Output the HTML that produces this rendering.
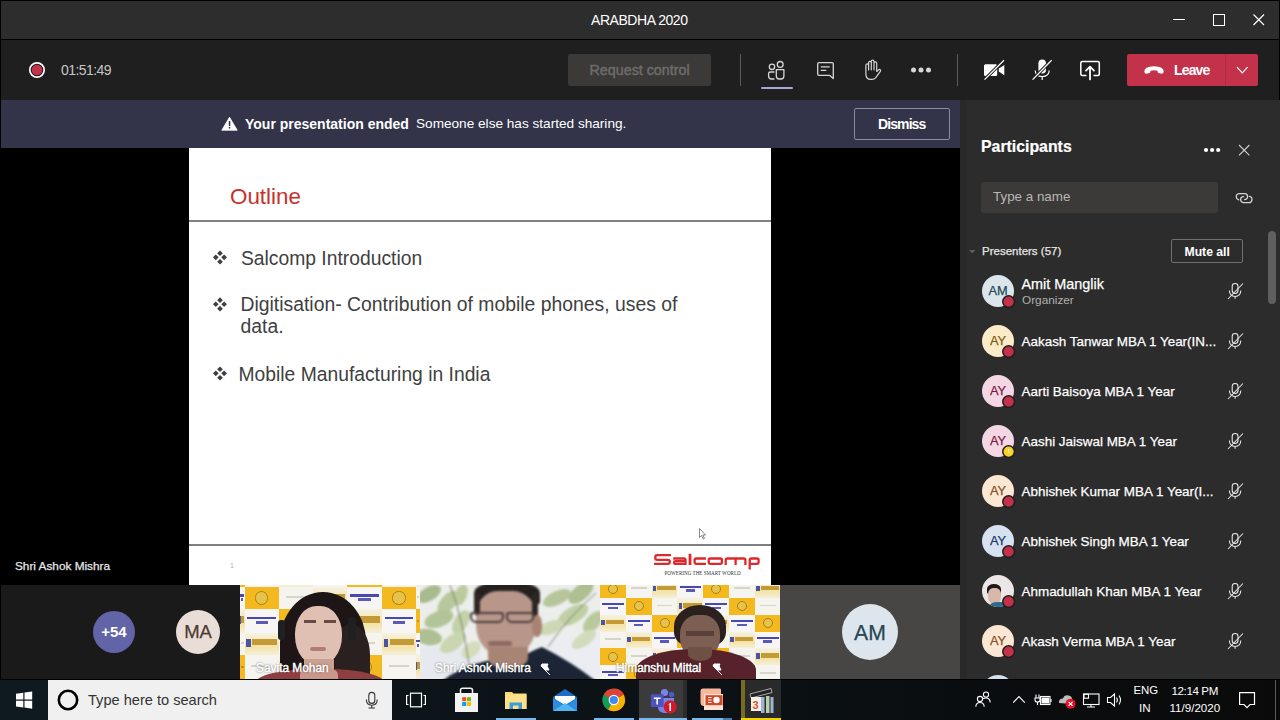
<!DOCTYPE html>
<html><head><meta charset="utf-8">
<style>
*{margin:0;padding:0;box-sizing:border-box}
html,body{width:1280px;height:720px;overflow:hidden;background:#000}
body{position:relative;font-family:"Liberation Sans",sans-serif;color:#fff}
.a{position:absolute}
.t{position:absolute;line-height:1;white-space:nowrap}
svg{position:absolute;overflow:visible}
.w{-webkit-text-stroke:0.25px currentColor}
</style></head><body>
<!-- title bar -->
<div class="a" style="left:1px;top:1px;width:1278px;height:38px;background:#2d2d2d"></div>
<div class="t" style="left:591px;top:13px;font-size:14px;color:#fff;letter-spacing:-0.45px">ARABDHA 2020</div>
<div class="a" style="left:1173px;top:19px;width:12px;height:1px;background:#fff"></div>
<div class="a" style="left:1213px;top:14px;width:12px;height:12px;border:1px solid #fff"></div>
<svg style="left:0;top:0" width="1" height="1"><path d="M1253.5 14.5L1264 25M1264 14.5L1253.5 25" stroke="#fff" stroke-width="1.2"/></svg>

<!-- meeting header -->
<div class="a" style="left:1px;top:40px;width:1278px;height:60px;background:#1f1f1f"></div>
<svg style="left:0;top:0" width="1" height="1">
 <circle cx="37" cy="70" r="7.2" fill="none" stroke="#fff" stroke-width="1.7"/>
 <circle cx="37" cy="70" r="5.3" fill="#c4314b"/>
</svg>
<div class="t" style="left:61px;top:63px;font-size:14px;color:#c8c6c4;letter-spacing:-0.55px">01:51:49</div>

<div class="a" style="left:568px;top:54px;width:143px;height:32px;background:#3b3a39;border-radius:2px"></div>
<div class="t" style="left:589.5px;top:63px;font-size:14.3px;color:#6d6c6b;-webkit-text-stroke:0.45px #6d6c6b">Request control</div>
<div class="a" style="left:740px;top:54px;width:1px;height:32px;background:#5a5a5a"></div>
<div class="a" style="left:957px;top:54px;width:1px;height:32px;background:#5a5a5a"></div>

<svg style="left:0;top:0" width="1" height="1" fill="none" stroke="#d6d6d6" stroke-width="1.3" stroke-linecap="round" stroke-linejoin="round">
 <!-- people -->
 <circle cx="772" cy="66.8" r="2.7"/>
 <circle cx="780.2" cy="64.4" r="2.9"/>
 <path d="M774 72H770.2Q768.6 72 768.6 73.6V76Q768.6 79 771.6 79H774"/>
 <path d="M776.3 69.7H783.9V76Q783.9 79 780.9 79H779.3Q776.3 79 776.3 76Z"/>
 <!-- chat -->
 <path d="M819 62.7H832Q833.3 62.7 833.3 64V78.6L829.5 75.3H819Q817.7 75.3 817.7 74V64Q817.7 62.7 819 62.7Z"/>
 <path d="M821.3 66.8H829.3M821.3 70.4H825.8"/>
 <!-- hand -->
 <path d="M865.9 74V65.3a1.35 1.35 0 0 1 2.7 0V70V62.7a1.35 1.35 0 0 1 2.7 0V69.8V61.4a1.35 1.35 0 0 1 2.7 0V69.8V63.3a1.35 1.35 0 0 1 2.7 0V71.5L878.8 69.6a1.2 1.2 0 0 1 1.7 1.5L875.6 77.8Q874.2 79.4 872 79.4H870.8Q865.9 79.4 865.9 74Z" stroke-width="1.2"/>
</svg>
<svg style="left:0;top:0" width="1" height="1" fill="#d6d6d6">
 <circle cx="913.5" cy="70" r="2.5"/><circle cx="921" cy="70" r="2.5"/><circle cx="928.5" cy="70" r="2.5"/>
</svg>
<div class="a" style="left:761px;top:87px;width:32px;height:2px;background:#a6a7dc;border-radius:1px"></div>

<!-- camera / mic / share -->
<svg style="left:0;top:0" width="1" height="1">
 <rect x="984" y="64.3" width="13.2" height="11.8" rx="1.6" fill="#fff"/>
 <path d="M998.8 68.6L1004.3 65V75.2L998.8 71.6Z" fill="#fff"/>
 <path d="M984.5 79.6L1004 60.2" stroke="#1f1f1f" stroke-width="3.2"/>
 <path d="M984.5 79.6L1004 60.2" stroke="#fff" stroke-width="1.3"/>
 <rect x="1038.4" y="59.6" width="7.6" height="14" rx="3.8" fill="#fff"/>
 <path d="M1035.2 70.6Q1035.4 76.6 1042.2 76.6Q1049 76.6 1049.2 70.6M1042.2 76.6V80" fill="none" stroke="#fff" stroke-width="1.2"/>
 <path d="M1032.6 79.6L1051.6 60.2" stroke="#1f1f1f" stroke-width="3.2"/>
 <path d="M1032.6 79.6L1051.6 60.2" stroke="#fff" stroke-width="1.3"/>
 <path d="M1086.5 75.6H1082.3Q1080.8 75.6 1080.8 74.1V63Q1080.8 61.5 1082.3 61.5H1097.8Q1099.3 61.5 1099.3 63V74.1Q1099.3 75.6 1097.8 75.6H1093.5" fill="none" stroke="#fff" stroke-width="1.5"/>
 <path d="M1090 79.4V66.8M1086 70.6L1090 66.6L1094 70.6" fill="none" stroke="#fff" stroke-width="1.8" stroke-linecap="round" stroke-linejoin="round"/>
</svg>

<!-- Leave -->
<div class="a" style="left:1127px;top:54px;width:131px;height:32px;background:#c4314b;border-radius:2px"></div>
<div class="a" style="left:1225px;top:54px;width:1px;height:32px;background:#b32c44"></div>
<svg style="left:0;top:0" width="1" height="1">
 <path d="M1144.3 71.8Q1144 66.6 1154 66.2Q1164 66.6 1163.7 71.8Q1163.4 74 1160.8 73.6L1158.5 73Q1157.3 72.6 1157.5 70.8Q1154 69.9 1150.5 70.8Q1150.7 72.6 1149.5 73L1147.2 73.6Q1144.6 74 1144.3 71.8Z" fill="#fff"/>
 <path d="M1237 67.2L1242.3 72.8L1247.6 67.2" fill="none" stroke="#fff" stroke-width="1.2"/>
</svg>
<div class="t" style="left:1174px;top:63px;font-size:14px;font-weight:bold;color:#fff;letter-spacing:-0.85px">Leave</div>

<!-- banner -->
<div class="a" style="left:1px;top:100px;width:959px;height:48px;background:#33344a"></div>
<svg style="left:0;top:0" width="1" height="1">
 <path d="M229.5 117.2L237.2 130.2H221.8Z" fill="#fff" stroke="#fff" stroke-width="0.8" stroke-linejoin="round"/>
 <rect x="228.8" y="121" width="1.5" height="5" fill="#33344a"/>
 <rect x="228.8" y="127" width="1.5" height="1.5" fill="#33344a"/>
</svg>
<div class="t" style="left:245px;top:117px;font-size:14px;font-weight:bold;color:#fff">Your presentation ended</div>
<div class="t" style="left:416px;top:117px;font-size:13.62px;color:#fff">Someone else has started sharing.</div>
<div class="a" style="left:854px;top:108px;width:96px;height:32px;border:1px solid #8a8aa0;border-radius:2px"></div>
<div class="t" style="left:878px;top:116.6px;font-size:14px;font-weight:bold;color:#fff;letter-spacing:-0.9px">Dismiss</div>
<!-- stage -->
<div class="a" style="left:0;top:148px;width:960px;height:437px;background:#000"></div>
<div class="a" style="left:189px;top:148px;width:582px;height:437px;background:#fff"></div>
<div class="t" style="left:230px;top:186px;font-size:22.4px;color:#c8312b">Outline</div>
<div class="a" style="left:189px;top:219.5px;width:582px;height:2px;background:#808080"></div>
<svg style="left:0;top:0" width="1" height="1" fill="#404040">
 <path d="M220 250.4l2.85 2.85l-2.85 2.85l-2.85-2.85Z M215.8 254.5l2.85 2.85l-2.85 2.85l-2.85-2.85Z M224.1 254.5l2.85 2.85l-2.85 2.85l-2.85-2.85Z M220 258.9l2.85 2.85l-2.85 2.85l-2.85-2.85Z"/>
 <path transform="translate(0 46.9)" d="M220 250.4l2.85 2.85l-2.85 2.85l-2.85-2.85Z M215.8 254.5l2.85 2.85l-2.85 2.85l-2.85-2.85Z M224.1 254.5l2.85 2.85l-2.85 2.85l-2.85-2.85Z M220 258.9l2.85 2.85l-2.85 2.85l-2.85-2.85Z"/>
 <path transform="translate(0 116)" d="M220 250.4l2.85 2.85l-2.85 2.85l-2.85-2.85Z M215.8 254.5l2.85 2.85l-2.85 2.85l-2.85-2.85Z M224.1 254.5l2.85 2.85l-2.85 2.85l-2.85-2.85Z M220 258.9l2.85 2.85l-2.85 2.85l-2.85-2.85Z"/>
</svg>
<div class="t" style="left:241px;top:249px;font-size:19.3px;color:#404040">Salcomp Introduction</div>
<div class="t" style="left:240.5px;top:295px;font-size:19.38px;color:#404040">Digitisation- Contribution of mobile phones, uses of</div>
<div class="t" style="left:240.5px;top:317px;font-size:19.38px;color:#404040">data.</div>
<div class="t" style="left:238.5px;top:365px;font-size:19.3px;color:#404040">Mobile Manufacturing in India</div>
<div class="a" style="left:189px;top:543.5px;width:582px;height:2px;background:#808080"></div>
<div class="t" style="left:230px;top:562px;font-size:7px;color:#b0b0b0">1</div>
<svg style="left:0;top:0" width="1" height="1" fill="none" stroke="#dc2a2c" stroke-width="2.3">
 <path d="M671 555.1H657.2Q655.3 555.1 655.3 557V557.9Q655.3 559.8 657.2 559.8H667.9Q669.8 559.8 669.8 561.7V561.9Q669.8 563.8 667.9 563.8H654"/>
 <path d="M673.2 558.5H683.8Q685.5 558.5 685.5 560.2V565M685.5 561.1H675.6Q674.1 561.1 674.1 562.4Q674.1 563.8 675.6 563.8H685.5"/>
 <path d="M690 553.8V565" stroke-width="2.8"/>
 <path d="M706 558.5H696.3Q694.6 558.5 694.6 560.2V562.1Q694.6 563.8 696.3 563.8H706"/>
 <rect x="708.7" y="558.5" width="13.2" height="5.3" rx="1.6"/>
 <path d="M725.7 565V560.2Q725.7 558.5 727.4 558.5H743.7Q745.4 558.5 745.4 560.2V565M735.6 558.5V565"/>
 <path d="M749.7 569.4V560.2Q749.7 558.5 751.4 558.5H756.9Q758.6 558.5 758.6 560.2V562.1Q758.6 563.8 756.9 563.8H749.7"/>
</svg>
<div class="t" style="left:664.5px;top:571.2px;font-size:5.1px;color:#333;font-family:'Liberation Serif',serif">POWERING THE SMART WORLD</div>
<svg style="left:0;top:0" width="1" height="1"><path d="M699.5 528.5V537.5L701.5 535.5L703.3 539L704.5 538.4L702.8 535H705.5Z" fill="#fff" stroke="#555" stroke-width="0.7"/></svg>
<!-- participants panel -->
<div class="a" style="left:960px;top:100px;width:320px;height:579px;background:#2d2c2c"></div>
<div class="a" style="left:960px;top:100px;width:7px;height:579px;background:#2a2929"></div>
<div class="t" style="left:981px;top:139.2px;font-size:15.85px;font-weight:bold;color:#fff;-webkit-text-stroke:0.2px #fff">Participants</div>
<svg style="left:0;top:0" width="1" height="1" fill="#fff"><circle cx="1206" cy="150" r="2.1"/><circle cx="1212.1" cy="150" r="2.1"/><circle cx="1218.2" cy="150" r="2.1"/><path d="M1239 145L1249.4 155.4M1249.4 145L1239 155.4" stroke="#d0d0d0" stroke-width="1.1" fill="none"/></svg>
<div class="a" style="left:981px;top:182px;width:237px;height:31px;background:#3b3a39;border-radius:3px"></div>
<div class="t" style="left:993px;top:190px;font-size:13.4px;color:#b9b7b5">Type a name</div>
<svg style="left:0;top:0" width="1" height="1" fill="none" stroke="#d4d4d4" stroke-width="1.3" stroke-linecap="round"><path d="M1238.8 199.8A3.1 3.1 0 0 1 1240 193.6H1244.6A3 3 0 0 1 1244.6 199.6"/><path d="M1249.4 196.4A3.1 3.1 0 0 1 1248.2 202.6H1243.6A3 3 0 0 1 1243.6 196.6"/></svg>
<svg style="left:0;top:0" width="1" height="1"><path d="M969 250L975.6 250L972.3 253.5Z" fill="#5c5c5c"/></svg>
<div class="t w" style="left:982px;top:245.5px;font-size:11.5px;color:#e6e6e6">Presenters (57)</div>
<div class="a" style="left:1171px;top:239px;width:72px;height:24px;border:1px solid #707070;border-radius:2px"></div>
<div class="t" style="left:1184.5px;top:245.5px;font-size:12.2px;font-weight:bold;color:#fff">Mute all</div>
<div class="a" style="left:1268px;top:231px;width:8px;height:73px;background:#5f5f5f;border-radius:4px"></div>
<div class="a" style="left:982px;top:275px;width:32px;height:32px;border-radius:50%;background:#dbe6ec"></div>
<div class="t w" style="left:982px;width:32px;text-align:center;top:284.8px;font-size:12.8px;color:#244656">AM</div>
<svg style="left:0;top:0" width="1" height="1"><circle cx="1008.6" cy="301.6" r="6.6" fill="#1e1e1e"/><circle cx="1008.6" cy="301.6" r="5.1" fill="#c4314b"/></svg>
<div class="t w" style="left:1021.5px;top:277.4px;font-size:14.4px;color:#fff">Amit Manglik</div>
<div class="t" style="left:1022px;top:294.8px;font-size:11.8px;color:#b0b0b0">Organizer</div>
<svg style="left:0;top:0" width="1" height="1" fill="none" stroke="#ececec" stroke-width="1.05"><rect x="1232.2" y="283.4" width="5.8" height="10" rx="2.9"/><path d="M1229.4 290.5Q1229.6 296.4 1235.1 296.4Q1240.6 296.4 1240.8 290.5M1235.1 296.4V298.8"/><path d="M1228 299L1243 283.5"/></svg>
<div class="a" style="left:982px;top:325px;width:32px;height:32px;border-radius:50%;background:#fbebc9"></div>
<div class="t w" style="left:982px;width:32px;text-align:center;top:334.8px;font-size:12.8px;color:#7d5e10">AY</div>
<svg style="left:0;top:0" width="1" height="1"><circle cx="1008.6" cy="351.6" r="6.6" fill="#1e1e1e"/><circle cx="1008.6" cy="351.6" r="5.1" fill="#c4314b"/></svg>
<div class="t w" style="left:1021.5px;top:335px;font-size:13.45px;color:#fff">Aakash Tanwar MBA 1 Year(IN...</div>
<svg style="left:0;top:0" width="1" height="1" fill="none" stroke="#ececec" stroke-width="1.05"><rect x="1232.2" y="333.4" width="5.8" height="10" rx="2.9"/><path d="M1229.4 340.5Q1229.6 346.4 1235.1 346.4Q1240.6 346.4 1240.8 340.5M1235.1 346.4V348.8"/><path d="M1228 349L1243 333.5"/></svg>
<div class="a" style="left:982px;top:375px;width:32px;height:32px;border-radius:50%;background:#f3d7e4"></div>
<div class="t w" style="left:982px;width:32px;text-align:center;top:384.8px;font-size:12.8px;color:#7e1a46">AY</div>
<svg style="left:0;top:0" width="1" height="1"><circle cx="1008.6" cy="401.6" r="6.6" fill="#1e1e1e"/><circle cx="1008.6" cy="401.6" r="5.1" fill="#c4314b"/></svg>
<div class="t w" style="left:1021.5px;top:385px;font-size:13.45px;color:#fff">Aarti Baisoya MBA 1 Year</div>
<svg style="left:0;top:0" width="1" height="1" fill="none" stroke="#ececec" stroke-width="1.05"><rect x="1232.2" y="383.4" width="5.8" height="10" rx="2.9"/><path d="M1229.4 390.5Q1229.6 396.4 1235.1 396.4Q1240.6 396.4 1240.8 390.5M1235.1 396.4V398.8"/><path d="M1228 399L1243 383.5"/></svg>
<div class="a" style="left:982px;top:425px;width:32px;height:32px;border-radius:50%;background:#f3d7e4"></div>
<div class="t w" style="left:982px;width:32px;text-align:center;top:434.8px;font-size:12.8px;color:#7e1a46">AY</div>
<svg style="left:0;top:0" width="1" height="1"><circle cx="1008.6" cy="451.6" r="6.6" fill="#1e1e1e"/><circle cx="1008.6" cy="451.6" r="5.1" fill="#f8d22a"/><path d="M1008.6 449V451.8L1010.2 453.4" stroke="#fff" stroke-width="0.9" fill="none"/></svg>
<div class="t w" style="left:1021.5px;top:435px;font-size:13.45px;color:#fff">Aashi Jaiswal MBA 1 Year</div>
<svg style="left:0;top:0" width="1" height="1" fill="none" stroke="#ececec" stroke-width="1.05"><rect x="1232.2" y="433.4" width="5.8" height="10" rx="2.9"/><path d="M1229.4 440.5Q1229.6 446.4 1235.1 446.4Q1240.6 446.4 1240.8 440.5M1235.1 446.4V448.8"/><path d="M1228 449L1243 433.5"/></svg>
<div class="a" style="left:982px;top:475px;width:32px;height:32px;border-radius:50%;background:#fbe7d3"></div>
<div class="t w" style="left:982px;width:32px;text-align:center;top:484.8px;font-size:12.8px;color:#84501e">AY</div>
<svg style="left:0;top:0" width="1" height="1"><circle cx="1008.6" cy="501.6" r="6.6" fill="#1e1e1e"/><circle cx="1008.6" cy="501.6" r="5.1" fill="#c4314b"/></svg>
<div class="t w" style="left:1021.5px;top:485px;font-size:13.45px;color:#fff">Abhishek Kumar MBA 1 Year(I...</div>
<svg style="left:0;top:0" width="1" height="1" fill="none" stroke="#ececec" stroke-width="1.05"><rect x="1232.2" y="483.4" width="5.8" height="10" rx="2.9"/><path d="M1229.4 490.5Q1229.6 496.4 1235.1 496.4Q1240.6 496.4 1240.8 490.5M1235.1 496.4V498.8"/><path d="M1228 499L1243 483.5"/></svg>
<div class="a" style="left:982px;top:525px;width:32px;height:32px;border-radius:50%;background:#d6e2ef"></div>
<div class="t w" style="left:982px;width:32px;text-align:center;top:534.8px;font-size:12.8px;color:#1b3668">AY</div>
<svg style="left:0;top:0" width="1" height="1"><circle cx="1008.6" cy="551.6" r="6.6" fill="#1e1e1e"/><circle cx="1008.6" cy="551.6" r="5.1" fill="#c4314b"/></svg>
<div class="t w" style="left:1021.5px;top:535px;font-size:13.45px;color:#fff">Abhishek Singh MBA 1 Year</div>
<svg style="left:0;top:0" width="1" height="1" fill="none" stroke="#ececec" stroke-width="1.05"><rect x="1232.2" y="533.4" width="5.8" height="10" rx="2.9"/><path d="M1229.4 540.5Q1229.6 546.4 1235.1 546.4Q1240.6 546.4 1240.8 540.5M1235.1 546.4V548.8"/><path d="M1228 549L1243 533.5"/></svg>
<div class="a" style="left:982px;top:575px;width:32px;height:32px;border-radius:50%;overflow:hidden;background:#ece6e6"><div class="a" style="left:5px;top:9px;width:14px;height:10px;border-radius:50% 50% 20% 20%;background:#1e1818"></div><div class="a" style="left:6px;top:13px;width:13px;height:16px;border-radius:40% 40% 45% 45%;background:#d8b8a8"></div><div class="a" style="left:8px;top:27px;width:18px;height:8px;border-radius:40% 40% 0 0;background:#2d6b8c"></div></div>
<svg style="left:0;top:0" width="1" height="1"><circle cx="1008.6" cy="601.6" r="6.6" fill="#1e1e1e"/><circle cx="1008.6" cy="601.6" r="5.1" fill="#c4314b"/></svg>
<div class="t w" style="left:1021.5px;top:585px;font-size:13.45px;color:#fff">Ahmadullah Khan MBA 1 Year</div>
<svg style="left:0;top:0" width="1" height="1" fill="none" stroke="#ececec" stroke-width="1.05"><rect x="1232.2" y="583.4" width="5.8" height="10" rx="2.9"/><path d="M1229.4 590.5Q1229.6 596.4 1235.1 596.4Q1240.6 596.4 1240.8 590.5M1235.1 596.4V598.8"/><path d="M1228 599L1243 583.5"/></svg>
<div class="a" style="left:982px;top:625px;width:32px;height:32px;border-radius:50%;background:#fbe7d3"></div>
<div class="t w" style="left:982px;width:32px;text-align:center;top:634.8px;font-size:12.8px;color:#84501e">AY</div>
<svg style="left:0;top:0" width="1" height="1"><circle cx="1008.6" cy="651.6" r="6.6" fill="#1e1e1e"/><circle cx="1008.6" cy="651.6" r="5.1" fill="#c4314b"/></svg>
<div class="t w" style="left:1021.5px;top:635px;font-size:13.45px;color:#fff">Akash Verma MBA 1 Year</div>
<svg style="left:0;top:0" width="1" height="1" fill="none" stroke="#ececec" stroke-width="1.05"><rect x="1232.2" y="633.4" width="5.8" height="10" rx="2.9"/><path d="M1229.4 640.5Q1229.6 646.4 1235.1 646.4Q1240.6 646.4 1240.8 640.5M1235.1 646.4V648.8"/><path d="M1228 649L1243 633.5"/></svg>
<div class="a" style="left:960px;top:674px;width:320px;height:5px;overflow:hidden"><div class="a" style="left:22px;top:1px;width:32px;height:32px;border-radius:50%;background:#d6e2ef"></div></div>
<!-- strip -->
<div class="a" style="left:1px;top:585px;width:239px;height:94px;background:#1b1a1a"></div>
<div class="t w" style="left:15px;top:560.8px;font-size:11.8px;color:#e8e8e8">Shri Ashok Mishra</div>
<div class="a" style="left:93px;top:611px;width:42px;height:42px;border-radius:50%;background:#6264a7"></div>
<div class="t" style="left:93px;width:42px;text-align:center;top:624px;font-size:15px;font-weight:bold;color:#fff">+54</div>
<div class="a" style="left:176px;top:610px;width:44px;height:44px;border-radius:50%;background:#e9ded7"></div>
<div class="t w" style="left:176px;width:44px;text-align:center;top:622.8px;font-size:18.5px;color:#4f3a2e">MA</div>
<div class="a" style="left:240px;top:585px;width:180px;height:94px;overflow:hidden;background:#f5f3ec">
<div class="a" style="left:0;top:0;width:180px;height:94px;filter:blur(0.7px)">
<div class="a" style="left:0.0px;top:-21.0px;width:4.5px;height:23.0px;background:#f3b91f"></div>
<div class="a" style="left:0.9px;top:-10.8px;width:2.7px;height:2.7px;border-radius:50%;border:1.6px solid #a8801c;background:#e8c34a"></div>
<div class="a" style="left:0.0px;top:2.0px;width:4.5px;height:22.0px;background:#f7f6f4"></div>
<div class="a" style="left:0.4px;top:9.0px;width:3.8px;height:2.6px;background:#4848b0"></div>
<div class="a" style="left:1.4px;top:13.4px;width:1.6px;height:3.1px;background:#5a5ab8"></div>
<div class="a" style="left:0.0px;top:24.0px;width:4.5px;height:23.5px;background:linear-gradient(180deg,#f6f2e4 0,#f3e3a6 60%,#f5efd8 100%)"></div>
<div class="a" style="left:0.2px;top:31.1px;width:0.6px;height:8.0px;background:#4a54a0"></div>
<div class="a" style="left:1.0px;top:31.1px;width:3.2px;height:6.6px;background:#c49a36"></div>
<div class="a" style="left:0.0px;top:47.5px;width:4.5px;height:22.5px;background:#f6f4ef"></div>
<div class="a" style="left:0.9px;top:56.5px;width:2.7px;height:2.2px;background:#d8d4cc"></div>
<div class="a" style="left:0.0px;top:70.0px;width:4.5px;height:24.0px;background:#f3b91f"></div>
<div class="a" style="left:0.9px;top:80.7px;width:2.7px;height:2.7px;border-radius:50%;border:1.6px solid #a8801c;background:#e8c34a"></div>
<div class="a" style="left:4.5px;top:-21.0px;width:34.5px;height:23.0px;background:#f6f4ef"></div>
<div class="a" style="left:11.4px;top:-11.8px;width:20.7px;height:2.3px;background:#d8d4cc"></div>
<div class="a" style="left:4.5px;top:2.0px;width:34.5px;height:22.0px;background:#f3b91f"></div>
<div class="a" style="left:15.2px;top:6.4px;width:13.2px;height:13.2px;border-radius:50%;border:1.6px solid #a8801c;background:#e8c34a"></div>
<div class="a" style="left:4.5px;top:24.0px;width:34.5px;height:23.5px;background:#f7f6f4"></div>
<div class="a" style="left:7.3px;top:31.5px;width:29.0px;height:2.8px;background:#4848b0"></div>
<div class="a" style="left:15.5px;top:36.2px;width:12.4px;height:3.3px;background:#5a5ab8"></div>
<div class="a" style="left:4.5px;top:47.5px;width:34.5px;height:22.5px;background:linear-gradient(180deg,#f6f2e4 0,#f3e3a6 60%,#f5efd8 100%)"></div>
<div class="a" style="left:6.2px;top:54.2px;width:4.8px;height:7.7px;background:#4a54a0"></div>
<div class="a" style="left:12.1px;top:54.2px;width:24.8px;height:6.3px;background:#c49a36"></div>
<div class="a" style="left:4.5px;top:70.0px;width:34.5px;height:24.0px;background:#f6f4ef"></div>
<div class="a" style="left:11.4px;top:79.6px;width:20.7px;height:2.4px;background:#d8d4cc"></div>
<div class="a" style="left:39.0px;top:-21.0px;width:34.0px;height:23.0px;background:linear-gradient(180deg,#f6f2e4 0,#f3e3a6 60%,#f5efd8 100%)"></div>
<div class="a" style="left:40.7px;top:-14.1px;width:4.8px;height:7.8px;background:#4a54a0"></div>
<div class="a" style="left:46.5px;top:-14.1px;width:24.5px;height:6.4px;background:#c49a36"></div>
<div class="a" style="left:39.0px;top:2.0px;width:34.0px;height:22.0px;background:#f6f4ef"></div>
<div class="a" style="left:45.8px;top:10.8px;width:20.4px;height:2.2px;background:#d8d4cc"></div>
<div class="a" style="left:39.0px;top:24.0px;width:34.0px;height:23.5px;background:#f3b91f"></div>
<div class="a" style="left:49.0px;top:28.7px;width:14.1px;height:14.1px;border-radius:50%;border:1.6px solid #a8801c;background:#e8c34a"></div>
<div class="a" style="left:39.0px;top:47.5px;width:34.0px;height:22.5px;background:#f7f6f4"></div>
<div class="a" style="left:41.7px;top:54.7px;width:28.6px;height:2.7px;background:#4848b0"></div>
<div class="a" style="left:49.9px;top:59.2px;width:12.2px;height:3.2px;background:#5a5ab8"></div>
<div class="a" style="left:39.0px;top:70.0px;width:34.0px;height:24.0px;background:linear-gradient(180deg,#f6f2e4 0,#f3e3a6 60%,#f5efd8 100%)"></div>
<div class="a" style="left:40.7px;top:77.2px;width:4.8px;height:8.2px;background:#4a54a0"></div>
<div class="a" style="left:46.5px;top:77.2px;width:24.5px;height:6.7px;background:#c49a36"></div>
<div class="a" style="left:73.0px;top:-21.0px;width:34.0px;height:23.0px;background:#f7f6f4"></div>
<div class="a" style="left:75.7px;top:-13.6px;width:28.6px;height:2.8px;background:#4848b0"></div>
<div class="a" style="left:83.9px;top:-9.0px;width:12.2px;height:3.2px;background:#5a5ab8"></div>
<div class="a" style="left:73.0px;top:2.0px;width:34.0px;height:22.0px;background:linear-gradient(180deg,#f6f2e4 0,#f3e3a6 60%,#f5efd8 100%)"></div>
<div class="a" style="left:74.7px;top:8.6px;width:4.8px;height:7.5px;background:#4a54a0"></div>
<div class="a" style="left:80.5px;top:8.6px;width:24.5px;height:6.2px;background:#c49a36"></div>
<div class="a" style="left:73.0px;top:24.0px;width:34.0px;height:23.5px;background:#f6f4ef"></div>
<div class="a" style="left:79.8px;top:33.4px;width:20.4px;height:2.4px;background:#d8d4cc"></div>
<div class="a" style="left:73.0px;top:47.5px;width:34.0px;height:22.5px;background:#f3b91f"></div>
<div class="a" style="left:83.2px;top:52.0px;width:13.5px;height:13.5px;border-radius:50%;border:1.6px solid #a8801c;background:#e8c34a"></div>
<div class="a" style="left:73.0px;top:70.0px;width:34.0px;height:24.0px;background:#f7f6f4"></div>
<div class="a" style="left:75.7px;top:77.7px;width:28.6px;height:2.9px;background:#4848b0"></div>
<div class="a" style="left:83.9px;top:82.5px;width:12.2px;height:3.4px;background:#5a5ab8"></div>
<div class="a" style="left:107.0px;top:-21.0px;width:35.0px;height:23.0px;background:#f3b91f"></div>
<div class="a" style="left:117.6px;top:-16.4px;width:13.8px;height:13.8px;border-radius:50%;border:1.6px solid #a8801c;background:#e8c34a"></div>
<div class="a" style="left:107.0px;top:2.0px;width:35.0px;height:22.0px;background:#f7f6f4"></div>
<div class="a" style="left:109.8px;top:9.0px;width:29.4px;height:2.6px;background:#4848b0"></div>
<div class="a" style="left:118.2px;top:13.4px;width:12.6px;height:3.1px;background:#5a5ab8"></div>
<div class="a" style="left:107.0px;top:24.0px;width:35.0px;height:23.5px;background:linear-gradient(180deg,#f6f2e4 0,#f3e3a6 60%,#f5efd8 100%)"></div>
<div class="a" style="left:108.8px;top:31.1px;width:4.9px;height:8.0px;background:#4a54a0"></div>
<div class="a" style="left:114.7px;top:31.1px;width:25.2px;height:6.6px;background:#c49a36"></div>
<div class="a" style="left:107.0px;top:47.5px;width:35.0px;height:22.5px;background:#f6f4ef"></div>
<div class="a" style="left:114.0px;top:56.5px;width:21.0px;height:2.2px;background:#d8d4cc"></div>
<div class="a" style="left:107.0px;top:70.0px;width:35.0px;height:24.0px;background:#f3b91f"></div>
<div class="a" style="left:117.3px;top:74.8px;width:14.4px;height:14.4px;border-radius:50%;border:1.6px solid #a8801c;background:#e8c34a"></div>
<div class="a" style="left:142.0px;top:-21.0px;width:34.0px;height:23.0px;background:#f6f4ef"></div>
<div class="a" style="left:148.8px;top:-11.8px;width:20.4px;height:2.3px;background:#d8d4cc"></div>
<div class="a" style="left:142.0px;top:2.0px;width:34.0px;height:22.0px;background:#f3b91f"></div>
<div class="a" style="left:152.4px;top:6.4px;width:13.2px;height:13.2px;border-radius:50%;border:1.6px solid #a8801c;background:#e8c34a"></div>
<div class="a" style="left:142.0px;top:24.0px;width:34.0px;height:23.5px;background:#f7f6f4"></div>
<div class="a" style="left:144.7px;top:31.5px;width:28.6px;height:2.8px;background:#4848b0"></div>
<div class="a" style="left:152.9px;top:36.2px;width:12.2px;height:3.3px;background:#5a5ab8"></div>
<div class="a" style="left:142.0px;top:47.5px;width:34.0px;height:22.5px;background:linear-gradient(180deg,#f6f2e4 0,#f3e3a6 60%,#f5efd8 100%)"></div>
<div class="a" style="left:143.7px;top:54.2px;width:4.8px;height:7.7px;background:#4a54a0"></div>
<div class="a" style="left:149.5px;top:54.2px;width:24.5px;height:6.3px;background:#c49a36"></div>
<div class="a" style="left:142.0px;top:70.0px;width:34.0px;height:24.0px;background:#f6f4ef"></div>
<div class="a" style="left:148.8px;top:79.6px;width:20.4px;height:2.4px;background:#d8d4cc"></div>
<div class="a" style="left:176.0px;top:-21.0px;width:4.0px;height:23.0px;background:linear-gradient(180deg,#f6f2e4 0,#f3e3a6 60%,#f5efd8 100%)"></div>
<div class="a" style="left:176.2px;top:-14.1px;width:0.6px;height:7.8px;background:#4a54a0"></div>
<div class="a" style="left:176.9px;top:-14.1px;width:2.9px;height:6.4px;background:#c49a36"></div>
<div class="a" style="left:176.0px;top:2.0px;width:4.0px;height:22.0px;background:#f6f4ef"></div>
<div class="a" style="left:176.8px;top:10.8px;width:2.4px;height:2.2px;background:#d8d4cc"></div>
<div class="a" style="left:176.0px;top:24.0px;width:4.0px;height:23.5px;background:#f3b91f"></div>
<div class="a" style="left:176.8px;top:34.5px;width:2.4px;height:2.4px;border-radius:50%;border:1.6px solid #a8801c;background:#e8c34a"></div>
<div class="a" style="left:176.0px;top:47.5px;width:4.0px;height:22.5px;background:#f7f6f4"></div>
<div class="a" style="left:176.3px;top:54.7px;width:3.4px;height:2.7px;background:#4848b0"></div>
<div class="a" style="left:177.3px;top:59.2px;width:1.4px;height:3.2px;background:#5a5ab8"></div>
<div class="a" style="left:176.0px;top:70.0px;width:4.0px;height:24.0px;background:linear-gradient(180deg,#f6f2e4 0,#f3e3a6 60%,#f5efd8 100%)"></div>
<div class="a" style="left:176.2px;top:77.2px;width:0.6px;height:8.2px;background:#4a54a0"></div>
<div class="a" style="left:176.9px;top:77.2px;width:2.9px;height:6.7px;background:#c49a36"></div>
<div class="a" style="left:40px;top:7px;width:86px;height:100px;border-radius:50% 50% 30% 30%;background:#1e1616"></div>
<div class="a" style="left:95px;top:40px;width:35px;height:60px;border-radius:40% 50% 10% 10%;background:#2a2020"></div>
<div class="a" style="left:55px;top:21px;width:47px;height:60px;border-radius:46% 46% 50% 50%;background:#dfc0b2"></div>
<div class="a" style="left:64px;top:35px;width:12px;height:3px;background:#6a4a44"></div>
<div class="a" style="left:84px;top:35px;width:12px;height:3px;background:#6a4a44"></div>
<div class="a" style="left:70px;top:62px;width:16px;height:4px;border-radius:2px;background:#b27a78"></div>
<div class="a" style="left:64px;top:74px;width:30px;height:14px;background:#caa090"></div>
<div class="a" style="left:16px;top:84px;width:128px;height:30px;border-radius:45% 45% 0 0;background:#8f3f42"></div>
<div class="a" style="left:60px;top:82px;width:38px;height:20px;border-radius:40% 40% 0 0;background:#c9968a"></div>
<div class="a" style="left:38px;top:35px;width:7px;height:20px;border-radius:3px;background:#202020"></div>
<div class="a" style="left:108px;top:32px;width:8px;height:24px;border-radius:3px;background:#202020"></div>
</div></div>
<div class="a" style="left:420px;top:585px;width:180px;height:94px;overflow:hidden;background:#eceeec">
<div class="a" style="left:0;top:0;width:180px;height:94px;filter:blur(0.8px)">
<div class="a" style="left:0;top:62px;width:60px;height:32px;background:#e6e9ee"></div>
<div class="a" style="left:118px;top:52px;width:62px;height:42px;background:#ebedf2"></div>
<div class="a" style="left:-4px;top:2px;width:26px;height:14px;border-radius:50%;background:#a9bb8e;transform:rotate(-30deg)"></div>
<div class="a" style="left:14px;top:10px;width:28px;height:15px;border-radius:50%;background:#b8c89c;transform:rotate(-50deg)"></div>
<div class="a" style="left:4px;top:26px;width:30px;height:16px;border-radius:50%;background:#b3c498;transform:rotate(-20deg)"></div>
<div class="a" style="left:28px;top:30px;width:26px;height:14px;border-radius:50%;background:#c3d1a8;transform:rotate(-60deg)"></div>
<div class="a" style="left:-6px;top:44px;width:28px;height:16px;border-radius:50%;background:#aebf93;transform:rotate(10deg)"></div>
<div class="a" style="left:18px;top:50px;width:30px;height:15px;border-radius:50%;background:#c9d6b0;transform:rotate(-35deg)"></div>
<div class="a" style="left:30px;top:4px;width:22px;height:12px;border-radius:50%;background:#bccb9f;transform:rotate(-70deg)"></div>
<div class="a" style="left:40px;top:58px;width:22px;height:14px;border-radius:50%;background:#d3ddbb;transform:rotate(-40deg)"></div>
<div class="a" style="left:122px;top:6px;width:30px;height:14px;border-radius:50%;background:#b6c69a;transform:rotate(-25deg)"></div>
<div class="a" style="left:146px;top:0px;width:30px;height:15px;border-radius:50%;background:#aebf92;transform:rotate(-40deg)"></div>
<div class="a" style="left:136px;top:22px;width:34px;height:16px;border-radius:50%;background:#c0cfa5;transform:rotate(-30deg)"></div>
<div class="a" style="left:160px;top:30px;width:26px;height:14px;border-radius:50%;background:#b9c99d;transform:rotate(-50deg)"></div>
<div class="a" style="left:118px;top:36px;width:26px;height:13px;border-radius:50%;background:#ccd8b5;transform:rotate(-20deg)"></div>
<div class="a" style="left:150px;top:48px;width:28px;height:13px;border-radius:50%;background:#d2dcbd;transform:rotate(-35deg)"></div>
<svg style="left:0;top:0" width="1" height="1"><path d="M30 0Q42 30 50 85M176 8Q150 30 128 62" stroke="#6e7660" stroke-width="0.9" fill="none"/></svg>
<div class="a" style="left:54px;top:-4px;width:66px;height:26px;border-radius:45% 45% 20% 20%;background:#242020"></div>
<div class="a" style="left:56px;top:6px;width:60px;height:66px;border-radius:36% 38% 48% 48%;background:#b8978a"></div>
<div class="a" style="left:54px;top:8px;width:6px;height:22px;border-radius:3px;background:#2e2624"></div>
<div class="a" style="left:112px;top:8px;width:6px;height:24px;border-radius:3px;background:#2e2624"></div>
<div class="a" style="left:112px;top:30px;width:10px;height:22px;border-radius:45%;background:#a88272"></div>
<div class="a" style="left:50px;top:27px;width:34px;height:11px;border-radius:3px 3px 6px 6px;border:2px solid #4a3c38"></div>
<div class="a" style="left:86px;top:27px;width:28px;height:11px;border-radius:3px 3px 6px 6px;border:2px solid #4a3c38"></div>
<div class="a" style="left:68px;top:56px;width:24px;height:5px;border-radius:3px;background:#8e6a62"></div>
<svg style="left:0;top:0" width="1" height="1"><path d="M22 96Q40 82 66 76L100 74Q110 66 122 62Q150 76 176 96Z" fill="#1c2536"/></svg>
<div class="a" style="left:68px;top:62px;width:40px;height:22px;border-radius:0 0 50% 50%;background:#a78474"></div>
</div></div>
<div class="a" style="left:600px;top:585px;width:180px;height:94px;overflow:hidden;background:#f5f3ec">
<div class="a" style="left:0;top:0;width:180px;height:94px;filter:blur(0.7px)">
<div class="a" style="left:0.0px;top:-4.4px;width:25.8px;height:17.0px;background:#f3b91f"></div>
<div class="a" style="left:7.8px;top:-1.0px;width:10.2px;height:10.2px;border-radius:50%;border:1.6px solid #a8801c;background:#e8c34a"></div>
<div class="a" style="left:25.8px;top:-4.4px;width:25.8px;height:17.0px;background:#f6f4ef"></div>
<div class="a" style="left:31.0px;top:2.4px;width:15.5px;height:1.7px;background:#d8d4cc"></div>
<div class="a" style="left:51.6px;top:-4.4px;width:25.8px;height:17.0px;background:linear-gradient(180deg,#f6f2e4 0,#f3e3a6 60%,#f5efd8 100%)"></div>
<div class="a" style="left:52.9px;top:0.7px;width:3.6px;height:5.8px;background:#4a54a0"></div>
<div class="a" style="left:57.3px;top:0.7px;width:18.6px;height:4.8px;background:#c49a36"></div>
<div class="a" style="left:77.4px;top:-4.4px;width:25.8px;height:17.0px;background:#f7f6f4"></div>
<div class="a" style="left:79.5px;top:1.0px;width:21.7px;height:2.0px;background:#4848b0"></div>
<div class="a" style="left:85.7px;top:4.4px;width:9.3px;height:2.4px;background:#5a5ab8"></div>
<div class="a" style="left:103.2px;top:-4.4px;width:25.8px;height:17.0px;background:#f3b91f"></div>
<div class="a" style="left:111.0px;top:-1.0px;width:10.2px;height:10.2px;border-radius:50%;border:1.6px solid #a8801c;background:#e8c34a"></div>
<div class="a" style="left:129.0px;top:-4.4px;width:25.8px;height:17.0px;background:#f6f4ef"></div>
<div class="a" style="left:134.2px;top:2.4px;width:15.5px;height:1.7px;background:#d8d4cc"></div>
<div class="a" style="left:154.8px;top:-4.4px;width:25.8px;height:17.0px;background:linear-gradient(180deg,#f6f2e4 0,#f3e3a6 60%,#f5efd8 100%)"></div>
<div class="a" style="left:156.1px;top:0.7px;width:3.6px;height:5.8px;background:#4a54a0"></div>
<div class="a" style="left:160.5px;top:0.7px;width:18.6px;height:4.8px;background:#c49a36"></div>
<div class="a" style="left:0.0px;top:12.6px;width:25.8px;height:17.2px;background:#f7f6f4"></div>
<div class="a" style="left:2.1px;top:18.1px;width:21.7px;height:2.1px;background:#4848b0"></div>
<div class="a" style="left:8.3px;top:21.5px;width:9.3px;height:2.4px;background:#5a5ab8"></div>
<div class="a" style="left:25.8px;top:12.6px;width:25.8px;height:17.2px;background:#f3b91f"></div>
<div class="a" style="left:33.5px;top:16.0px;width:10.3px;height:10.3px;border-radius:50%;border:1.6px solid #a8801c;background:#e8c34a"></div>
<div class="a" style="left:51.6px;top:12.6px;width:25.8px;height:17.2px;background:#f6f4ef"></div>
<div class="a" style="left:56.8px;top:19.5px;width:15.5px;height:1.7px;background:#d8d4cc"></div>
<div class="a" style="left:77.4px;top:12.6px;width:25.8px;height:17.2px;background:linear-gradient(180deg,#f6f2e4 0,#f3e3a6 60%,#f5efd8 100%)"></div>
<div class="a" style="left:78.7px;top:17.8px;width:3.6px;height:5.8px;background:#4a54a0"></div>
<div class="a" style="left:83.1px;top:17.8px;width:18.6px;height:4.8px;background:#c49a36"></div>
<div class="a" style="left:103.2px;top:12.6px;width:25.8px;height:17.2px;background:#f7f6f4"></div>
<div class="a" style="left:105.3px;top:18.1px;width:21.7px;height:2.1px;background:#4848b0"></div>
<div class="a" style="left:111.5px;top:21.5px;width:9.3px;height:2.4px;background:#5a5ab8"></div>
<div class="a" style="left:129.0px;top:12.6px;width:25.8px;height:17.2px;background:#f3b91f"></div>
<div class="a" style="left:136.7px;top:16.0px;width:10.3px;height:10.3px;border-radius:50%;border:1.6px solid #a8801c;background:#e8c34a"></div>
<div class="a" style="left:154.8px;top:12.6px;width:25.8px;height:17.2px;background:#f6f4ef"></div>
<div class="a" style="left:160.0px;top:19.5px;width:15.5px;height:1.7px;background:#d8d4cc"></div>
<div class="a" style="left:0.0px;top:29.8px;width:25.8px;height:16.8px;background:linear-gradient(180deg,#f6f2e4 0,#f3e3a6 60%,#f5efd8 100%)"></div>
<div class="a" style="left:1.3px;top:34.8px;width:3.6px;height:5.7px;background:#4a54a0"></div>
<div class="a" style="left:5.7px;top:34.8px;width:18.6px;height:4.7px;background:#c49a36"></div>
<div class="a" style="left:25.8px;top:29.8px;width:25.8px;height:16.8px;background:#f7f6f4"></div>
<div class="a" style="left:27.9px;top:35.2px;width:21.7px;height:2.0px;background:#4848b0"></div>
<div class="a" style="left:34.1px;top:38.5px;width:9.3px;height:2.4px;background:#5a5ab8"></div>
<div class="a" style="left:51.6px;top:29.8px;width:25.8px;height:16.8px;background:#f3b91f"></div>
<div class="a" style="left:59.5px;top:33.2px;width:10.1px;height:10.1px;border-radius:50%;border:1.6px solid #a8801c;background:#e8c34a"></div>
<div class="a" style="left:77.4px;top:29.8px;width:25.8px;height:16.8px;background:#f6f4ef"></div>
<div class="a" style="left:82.6px;top:36.5px;width:15.5px;height:1.7px;background:#d8d4cc"></div>
<div class="a" style="left:103.2px;top:29.8px;width:25.8px;height:16.8px;background:linear-gradient(180deg,#f6f2e4 0,#f3e3a6 60%,#f5efd8 100%)"></div>
<div class="a" style="left:104.5px;top:34.8px;width:3.6px;height:5.7px;background:#4a54a0"></div>
<div class="a" style="left:108.9px;top:34.8px;width:18.6px;height:4.7px;background:#c49a36"></div>
<div class="a" style="left:129.0px;top:29.8px;width:25.8px;height:16.8px;background:#f7f6f4"></div>
<div class="a" style="left:131.1px;top:35.2px;width:21.7px;height:2.0px;background:#4848b0"></div>
<div class="a" style="left:137.3px;top:38.5px;width:9.3px;height:2.4px;background:#5a5ab8"></div>
<div class="a" style="left:154.8px;top:29.8px;width:25.8px;height:16.8px;background:#f3b91f"></div>
<div class="a" style="left:162.7px;top:33.2px;width:10.1px;height:10.1px;border-radius:50%;border:1.6px solid #a8801c;background:#e8c34a"></div>
<div class="a" style="left:0.0px;top:46.6px;width:25.8px;height:16.8px;background:#f6f4ef"></div>
<div class="a" style="left:5.2px;top:53.3px;width:15.5px;height:1.7px;background:#d8d4cc"></div>
<div class="a" style="left:25.8px;top:46.6px;width:25.8px;height:16.8px;background:linear-gradient(180deg,#f6f2e4 0,#f3e3a6 60%,#f5efd8 100%)"></div>
<div class="a" style="left:27.1px;top:51.6px;width:3.6px;height:5.7px;background:#4a54a0"></div>
<div class="a" style="left:31.5px;top:51.6px;width:18.6px;height:4.7px;background:#c49a36"></div>
<div class="a" style="left:51.6px;top:46.6px;width:25.8px;height:16.8px;background:#f7f6f4"></div>
<div class="a" style="left:53.7px;top:52.0px;width:21.7px;height:2.0px;background:#4848b0"></div>
<div class="a" style="left:59.9px;top:55.3px;width:9.3px;height:2.4px;background:#5a5ab8"></div>
<div class="a" style="left:77.4px;top:46.6px;width:25.8px;height:16.8px;background:#f3b91f"></div>
<div class="a" style="left:85.3px;top:50.0px;width:10.1px;height:10.1px;border-radius:50%;border:1.6px solid #a8801c;background:#e8c34a"></div>
<div class="a" style="left:103.2px;top:46.6px;width:25.8px;height:16.8px;background:#f6f4ef"></div>
<div class="a" style="left:108.4px;top:53.3px;width:15.5px;height:1.7px;background:#d8d4cc"></div>
<div class="a" style="left:129.0px;top:46.6px;width:25.8px;height:16.8px;background:linear-gradient(180deg,#f6f2e4 0,#f3e3a6 60%,#f5efd8 100%)"></div>
<div class="a" style="left:130.3px;top:51.6px;width:3.6px;height:5.7px;background:#4a54a0"></div>
<div class="a" style="left:134.7px;top:51.6px;width:18.6px;height:4.7px;background:#c49a36"></div>
<div class="a" style="left:154.8px;top:46.6px;width:25.8px;height:16.8px;background:#f7f6f4"></div>
<div class="a" style="left:156.9px;top:52.0px;width:21.7px;height:2.0px;background:#4848b0"></div>
<div class="a" style="left:163.1px;top:55.3px;width:9.3px;height:2.4px;background:#5a5ab8"></div>
<div class="a" style="left:0.0px;top:63.4px;width:25.8px;height:16.8px;background:#f3b91f"></div>
<div class="a" style="left:7.9px;top:66.8px;width:10.1px;height:10.1px;border-radius:50%;border:1.6px solid #a8801c;background:#e8c34a"></div>
<div class="a" style="left:25.8px;top:63.4px;width:25.8px;height:16.8px;background:#f6f4ef"></div>
<div class="a" style="left:31.0px;top:70.1px;width:15.5px;height:1.7px;background:#d8d4cc"></div>
<div class="a" style="left:51.6px;top:63.4px;width:25.8px;height:16.8px;background:linear-gradient(180deg,#f6f2e4 0,#f3e3a6 60%,#f5efd8 100%)"></div>
<div class="a" style="left:52.9px;top:68.4px;width:3.6px;height:5.7px;background:#4a54a0"></div>
<div class="a" style="left:57.3px;top:68.4px;width:18.6px;height:4.7px;background:#c49a36"></div>
<div class="a" style="left:77.4px;top:63.4px;width:25.8px;height:16.8px;background:#f7f6f4"></div>
<div class="a" style="left:79.5px;top:68.8px;width:21.7px;height:2.0px;background:#4848b0"></div>
<div class="a" style="left:85.7px;top:72.1px;width:9.3px;height:2.4px;background:#5a5ab8"></div>
<div class="a" style="left:103.2px;top:63.4px;width:25.8px;height:16.8px;background:#f3b91f"></div>
<div class="a" style="left:111.1px;top:66.8px;width:10.1px;height:10.1px;border-radius:50%;border:1.6px solid #a8801c;background:#e8c34a"></div>
<div class="a" style="left:129.0px;top:63.4px;width:25.8px;height:16.8px;background:#f6f4ef"></div>
<div class="a" style="left:134.2px;top:70.1px;width:15.5px;height:1.7px;background:#d8d4cc"></div>
<div class="a" style="left:154.8px;top:63.4px;width:25.8px;height:16.8px;background:linear-gradient(180deg,#f6f2e4 0,#f3e3a6 60%,#f5efd8 100%)"></div>
<div class="a" style="left:156.1px;top:68.4px;width:3.6px;height:5.7px;background:#4a54a0"></div>
<div class="a" style="left:160.5px;top:68.4px;width:18.6px;height:4.7px;background:#c49a36"></div>
<div class="a" style="left:0.0px;top:80.2px;width:25.8px;height:16.8px;background:#f7f6f4"></div>
<div class="a" style="left:2.1px;top:85.6px;width:21.7px;height:2.0px;background:#4848b0"></div>
<div class="a" style="left:8.3px;top:88.9px;width:9.3px;height:2.4px;background:#5a5ab8"></div>
<div class="a" style="left:25.8px;top:80.2px;width:25.8px;height:16.8px;background:#f3b91f"></div>
<div class="a" style="left:33.7px;top:83.6px;width:10.1px;height:10.1px;border-radius:50%;border:1.6px solid #a8801c;background:#e8c34a"></div>
<div class="a" style="left:51.6px;top:80.2px;width:25.8px;height:16.8px;background:#f6f4ef"></div>
<div class="a" style="left:56.8px;top:86.9px;width:15.5px;height:1.7px;background:#d8d4cc"></div>
<div class="a" style="left:77.4px;top:80.2px;width:25.8px;height:16.8px;background:linear-gradient(180deg,#f6f2e4 0,#f3e3a6 60%,#f5efd8 100%)"></div>
<div class="a" style="left:78.7px;top:85.2px;width:3.6px;height:5.7px;background:#4a54a0"></div>
<div class="a" style="left:83.1px;top:85.2px;width:18.6px;height:4.7px;background:#c49a36"></div>
<div class="a" style="left:103.2px;top:80.2px;width:25.8px;height:16.8px;background:#f7f6f4"></div>
<div class="a" style="left:105.3px;top:85.6px;width:21.7px;height:2.0px;background:#4848b0"></div>
<div class="a" style="left:111.5px;top:88.9px;width:9.3px;height:2.4px;background:#5a5ab8"></div>
<div class="a" style="left:129.0px;top:80.2px;width:25.8px;height:16.8px;background:#f3b91f"></div>
<div class="a" style="left:136.9px;top:83.6px;width:10.1px;height:10.1px;border-radius:50%;border:1.6px solid #a8801c;background:#e8c34a"></div>
<div class="a" style="left:154.8px;top:80.2px;width:25.8px;height:16.8px;background:#f6f4ef"></div>
<div class="a" style="left:160.0px;top:86.9px;width:15.5px;height:1.7px;background:#d8d4cc"></div>
<div class="a" style="left:74px;top:20px;width:52px;height:42px;border-radius:50% 50% 35% 35%;background:#2a201e"></div>
<div class="a" style="left:80px;top:30px;width:40px;height:44px;border-radius:42% 42% 48% 48%;background:#7c5e52"></div>
<div class="a" style="left:86px;top:46px;width:28px;height:5px;background:#5a4038"></div>
<div class="a" style="left:36px;top:64px;width:120px;height:44px;border-radius:48% 48% 0 0;background:#57222a"></div>
<div class="a" style="left:88px;top:62px;width:24px;height:14px;border-radius:0 0 50% 50%;background:#6e5044"></div>
</div></div>
<div class="t" style="left:256px;top:663px;font-size:11.9px;color:#fff;-webkit-text-stroke:0.45px #fff;text-shadow:0 0 2px rgba(0,0,0,.8)">Savita Mohan</div>
<div class="t" style="left:435px;top:663px;font-size:11.9px;color:#fff;-webkit-text-stroke:0.45px #fff;text-shadow:0 0 2px rgba(0,0,0,.8)">Shri Ashok Mishra</div>
<div class="t" style="left:616px;top:663px;font-size:11.9px;color:#fff;-webkit-text-stroke:0.45px #fff;text-shadow:0 0 2px rgba(0,0,0,.8)">Himanshu Mittal</div>
<svg style="left:0;top:0" width="1" height="1"><path d="M542 664L548 664L547 666L549 670L545 670L541 666Z M545 670L550 675" fill="#fff" stroke="#fff" stroke-width="1"/></svg>
<svg style="left:0;top:0" width="1" height="1"><path d="M714 664L720 664L719 666L721 670L717 670L713 666Z M717 670L722 675" fill="#fff" stroke="#fff" stroke-width="1"/></svg>
<div class="a" style="left:780px;top:585px;width:180px;height:94px;background:#484644"></div>
<div class="a" style="left:842px;top:604px;width:56px;height:56px;border-radius:50%;background:#dce6ec"></div>
<div class="t w" style="left:842px;width:56px;text-align:center;top:621.5px;font-size:21.2px;color:#264555">AM</div>
<div class="a" style="left:0;top:679px;width:1280px;height:1px;background:#000"></div>
<!-- taskbar -->
<div class="a" style="left:0;top:680px;width:1280px;height:40px;background:linear-gradient(90deg,#0f1a20 0,#0d161b 300px,#0b1115 700px,#0a0d0f 1000px,#0a0a0a 1280px)"></div>
<svg style="left:0;top:0" width="1" height="1" fill="#fff">
 <path d="M16 693.8L23.3 692.8V699.5H16Z M24.5 692.6L32.2 691.5V699.5H24.5Z M16 700.7H23.3V707.4L16 706.4Z M24.5 700.7H32.2V708.7L24.5 707.6Z"/>
</svg>
<div class="a" style="left:48px;top:680px;width:344px;height:40px;background:#f0f0f0"></div>
<svg style="left:0;top:0" width="1" height="1"><circle cx="68" cy="700" r="9.2" fill="none" stroke="#000" stroke-width="2.6"/></svg>
<div class="t" style="left:88px;top:693px;font-size:14.6px;color:#333">Type here to search</div>
<svg style="left:0;top:0" width="1" height="1" fill="none" stroke="#333" stroke-width="1.1">
 <rect x="368.8" y="692.4" width="6" height="11" rx="3"/>
 <path d="M366.4 699.5Q366.4 705.2 371.8 705.2Q377.2 705.2 377.2 699.5M371.8 705.2V708M368.5 708H375"/>
</svg>
<!-- task view -->
<svg style="left:0;top:0" width="1" height="1" fill="none" stroke="#fff" stroke-width="1.2">
 <rect x="410.5" y="693.2" width="11" height="13.6"/>
 <path d="M408.5 695.5H406.6V704.5H408.5M423.5 695.5H425.4V704.5H423.5"/>
</svg>
<!-- store -->
<svg style="left:0;top:0" width="1" height="1">
 <path d="M460.5 693V690.3Q460.5 688.2 462.6 688.2H470.4Q472.5 688.2 472.5 690.3V693" fill="none" stroke="#f5f5f5" stroke-width="1.5"/>
 <rect x="455" y="693" width="23" height="19" fill="#f3f3f3"/>
 <rect x="462.2" y="697.2" width="4" height="4" fill="#f25022"/><rect x="467" y="697.2" width="4" height="4" fill="#7fba00"/>
 <rect x="462.2" y="702" width="4" height="4" fill="#00a4ef"/><rect x="467" y="702" width="4" height="4" fill="#ffb900"/>
</svg>
<!-- explorer -->
<svg style="left:0;top:0" width="1" height="1">
 <path d="M505 692H512L513.5 693.5H526.5V709H505Z" fill="#f8d775"/>
 <rect x="505" y="694.5" width="21.5" height="14.5" fill="#fce18a"/>
 <path d="M509.5 709V702.5H522V709H518.5V705.5H513V709Z" fill="#3c9ddd"/>
</svg>
<div class="a" style="left:496px;top:718px;width:40px;height:2px;background:#76b9ed"></div>
<!-- mail -->
<svg style="left:0;top:0" width="1" height="1">
 <path d="M553 697L565 689L577 697V711H553Z" fill="#1d6fc4"/>
 <path d="M555 696H575V699L565 705L555 699Z" fill="#fff"/>
 <path d="M553 698.5L565 706L577 698.5V711H553Z" fill="#2a8de0"/>
 <path d="M553 711L565 703L577 711Z" fill="#52b4f0"/>
</svg>
<!-- chrome -->
<svg style="left:0;top:0" width="1" height="1">
 <circle cx="613.8" cy="700" r="11.3" fill="#db4437"/>
 <path d="M613.8 700L603.9 694.5A11.3 11.3 0 0 0 608.2 709.8Z" fill="#0f9d58"/>
 <path d="M613.8 700L608.2 709.8A11.3 11.3 0 0 0 625.1 700.3L623.9 694.4Z" fill="#f4b400"/>
 <path d="M613.8 700L603.9 694.5A11.3 11.3 0 0 1 623.9 694.4Z" fill="#db4437"/>
 <circle cx="613.8" cy="700" r="5.2" fill="#fff"/>
 <circle cx="613.8" cy="700" r="4.1" fill="#4285f4"/>
</svg>
<div class="a" style="left:594px;top:718px;width:40px;height:2px;background:#76b9ed"></div>
<!-- teams -->
<div class="a" style="left:639px;top:680px;width:44px;height:40px;background:#3b3b3b"></div>
<div class="a" style="left:683px;top:680px;width:4px;height:40px;background:#2c2c2c"></div>
<div class="a" style="left:639px;top:718px;width:48px;height:2px;background:#76b9ed"></div>
<svg style="left:0;top:0" width="1" height="1">
 <circle cx="664.5" cy="692.5" r="3.6" fill="#7b83eb"/>
 <circle cx="671.5" cy="694.5" r="2.7" fill="#5059c9"/>
 <path d="M658 698H674V707Q674 713 666 713Q658 713 658 707Z" fill="#7b83eb"/>
 <rect x="650.8" y="694.2" width="12.8" height="12.8" rx="1" fill="#4b53bc"/>
 <path d="M653.8 697.4H660.6V699H658V704.4H656.4V699H653.8Z" fill="#fff"/>
 <circle cx="670.2" cy="706.8" r="6.6" fill="#d01a2c"/>
 <path d="M669.4 703.5L671 702.6V711H669.5V704.6L668.2 705.3Z" fill="#fff"/>
</svg>
<!-- ppt -->
<div class="a" style="left:692px;top:718px;width:31px;height:2px;background:#76b9ed"></div>
<div class="a" style="left:723px;top:718px;width:9px;height:2px;background:#4a7ea6"></div>
<svg style="left:0;top:0" width="1" height="1">
 <path d="M703 688.5H720Q721 688.5 721 690V708L703 706Q700.5 705.5 700.5 703V691Q700.5 688.5 703 688.5Z" fill="#f7b99c"/>
 <path d="M704 694H723V710H704Z" fill="#fbe3d7"/>
 <rect x="705.5" y="695.2" width="17" height="10" fill="#d24726"/>
 <path d="M708 697.5H711.5M708 700H711.5M708 702.5H711.5" stroke="#fff" stroke-width="1.2"/>
 <circle cx="716.5" cy="700" r="3.2" fill="#fff"/>
</svg>
<!-- mpc flashing -->
<div class="a" style="left:741px;top:680px;width:4px;height:40px;background:#7a6c1e"></div>
<div class="a" style="left:745px;top:680px;width:36px;height:40px;background:#2a2a2a"></div>
<div class="a" style="left:741px;top:718px;width:40px;height:2px;background:#f2d600"></div>
<svg style="left:0;top:0" width="1" height="1">
 <path d="M750 694L771 688.5L772 692.5L751 698Z" fill="#222" stroke="#fff" stroke-width="0.6"/>
 <rect x="751" y="697" width="11" height="14" fill="#f4f0ea"/>
 <text x="752.5" y="709" font-size="11" font-weight="bold" fill="#d9532a" font-family="Liberation Sans">3</text>
 <rect x="761" y="697" width="3.5" height="16" fill="#9fb3d8"/>
 <rect x="766" y="696" width="3.5" height="17" fill="#b5d2a8"/>
 <rect x="770.5" y="697" width="3" height="16" fill="#9fb3d8"/>
</svg>
<!-- tray -->
<svg style="left:0;top:0" width="1" height="1" fill="none" stroke="#fff" stroke-width="1.1">
 <circle cx="980" cy="699" r="2.6"/><path d="M975.8 706.8Q976 702.5 980 702.5Q984 702.5 984.2 706.8"/>
 <circle cx="986" cy="694.6" r="2.6"/><path d="M983 698.5Q984 698 986 698Q990 698 990.2 702.5"/>
 <path d="M1013.2 702.6L1019 696.6L1024.8 702.6"/>
 <path d="M1036 694.5V698M1039 694.5V698M1035 698H1040V700Q1040 702 1037.5 702Q1035 702 1035 700ZM1037.5 702V705" />
 <rect x="1040.5" y="696.5" width="9.5" height="8"/><path d="M1051 699V702"/>
 <rect x="1083.5" y="694" width="15.5" height="10.5"/><path d="M1091 704.5V707M1087 707H1095"/>
 <rect x="1084" y="694.2" width="4.5" height="4"/>
 <path d="M1107.5 697.5H1110.5L1114.5 694V706L1110.5 702.5H1107.5Z"/>
 <path d="M1116.5 697.5Q1118.3 700 1116.5 702.5M1119 695.5Q1122 700 1119 704.5"/>
</svg>
<svg style="left:0;top:0" width="1" height="1">
 <rect x="1041.5" y="697.5" width="7.5" height="6" fill="#fff"/>
 <path d="M1059 703Q1058.5 698.5 1063 698.5Q1064.5 694.5 1068.5 695.5Q1072.5 696 1072 700.5Q1070 703.5 1066 703.5Z" fill="#bdbdbd"/>
 <circle cx="1070.6" cy="703.8" r="5" fill="#e81123"/>
 <path d="M1068.6 701.8L1072.6 705.8M1072.6 701.8L1068.6 705.8" stroke="#fff" stroke-width="1.2"/>
</svg>
<div class="t" style="left:1133.5px;top:685px;font-size:11.4px;color:#fff">ENG</div>
<div class="t" style="left:1139px;top:701.5px;font-size:11.6px;color:#fff">IN</div>
<div class="t" style="left:1171.5px;top:685px;font-size:11.6px;color:#fff;letter-spacing:-0.4px">12:14 PM</div>
<div class="t" style="left:1169.5px;top:701.5px;font-size:11.6px;color:#fff">11/9/2020</div>
<svg style="left:0;top:0" width="1" height="1" fill="none" stroke="#fff" stroke-width="1.2">
 <path d="M1239.6 692.6H1254.5V704.5H1250L1247 707.6L1244 704.5H1239.6Z"/>
</svg>
<div class="a" style="left:1275px;top:680px;width:1px;height:40px;background:#5a5a5a"></div>
</body></html>
